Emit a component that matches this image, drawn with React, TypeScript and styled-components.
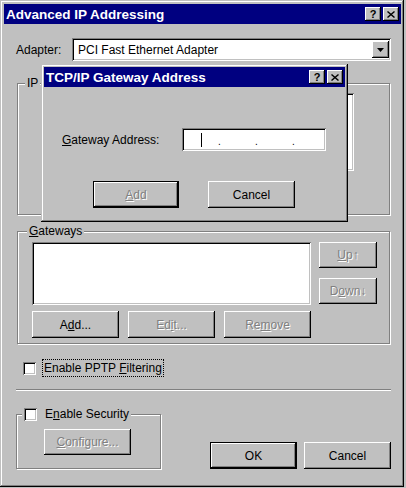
import React from "react";
import styled, { createGlobalStyle, css } from "styled-components";

const GlobalStyle = createGlobalStyle`
  html, body {
    margin: 0;
    padding: 0;
    background: #c0c0c0;
  }
  body {
    font-family: "Liberation Sans", Arial, sans-serif;
    font-size: 12px;
    color: #000;
  }
`;

const frame = css`
  box-shadow: inset -1px -1px #000, inset 1px 1px #c0c0c0, inset -2px -2px #808080, inset 2px 2px #fff;
`;

const raised = css`
  box-shadow: inset -1px -1px #000, inset 1px 1px #fff, inset -2px -2px #808080, inset 2px 2px #c0c0c0;
`;

const sunken = css`
  box-shadow: inset 1px 1px #808080, inset -1px -1px #fff, inset 2px 2px #000, inset -2px -2px #c0c0c0;
`;

const Window = styled.div`
  position: relative;
  width: 404px;
  height: 487px;
  box-sizing: border-box;
  padding: 4px 3px 3px 4px;
  background: #c0c0c0;
  display: flex;
  flex-direction: column;
  ${frame}
`;

const Dialog = styled.div`
  position: absolute;
  left: 41px;
  top: 64px;
  width: 307px;
  height: 158px;
  box-sizing: border-box;
  padding: 3px;
  background: #c0c0c0;
  display: flex;
  flex-direction: column;
  ${frame}
`;

const TitleBar = styled.div`
  height: 20px;
  flex: none;
  display: flex;
  align-items: center;
  justify-content: space-between;
  padding: 0 2px;
  background: #000080;
  color: #fff;
  font-weight: bold;
  font-size: 13.5px;
`;

const Caption = styled.div`
  display: flex;
  gap: 2px;
`;

const CaptionButton = styled.div`
  width: 16px;
  height: 14px;
  box-sizing: border-box;
  display: flex;
  align-items: center;
  justify-content: center;
  background: #c0c0c0;
  color: #000;
  font-size: 11px;
  font-weight: bold;
  ${raised}
`;

const Body = styled.div`
  display: flex;
  flex-direction: column;
  padding: 14px 10px 0 12px;
`;

const Row = styled.div`
  display: flex;
  align-items: center;
`;

const FieldLabel = styled.span<{ $w: number }>`
  width: ${(p) => p.$w}px;
  flex: none;
`;

const Combo = styled.div`
  flex: 1;
  height: 23px;
  box-sizing: border-box;
  padding: 2px 2px 2px 6px;
  display: flex;
  align-items: center;
  background: #fff;
  ${sunken}
`;

const ComboText = styled.span`
  flex: 1;
`;

const DropButton = styled.div`
  width: 17px;
  height: 17px;
  display: flex;
  align-items: center;
  justify-content: center;
  background: #c0c0c0;
  ${raised}
`;

const Group = styled.div<{ $h: number; $w?: number; $mt: number; $ml?: number }>`
  position: relative;
  box-sizing: border-box;
  height: ${(p) => p.$h}px;
  width: ${(p) => (p.$w ? `${p.$w}px` : "auto")};
  margin: ${(p) => p.$mt}px 1px 0 ${(p) => p.$ml ?? 1}px;
  border: 1px solid #808080;
  box-shadow: inset 1px 1px #fff, 1px 1px #fff;
`;

const Legend = styled.span<{ $left: number }>`
  position: absolute;
  top: -8px;
  left: ${(p) => p.$left}px;
  padding: 0 2px;
  line-height: 14px;
  background: #c0c0c0;
  display: flex;
  align-items: center;
  gap: 8px;
`;

const ListBox = styled.div<{ $w: number; $h: number }>`
  width: ${(p) => p.$w}px;
  height: ${(p) => p.$h}px;
  background: #fff;
  ${sunken}
`;

const IpInner = styled.div`
  display: flex;
  justify-content: flex-end;
  padding: 9px 35px 0 0;
`;

const GwGrid = styled.div`
  display: grid;
  grid-template-columns: 279px 58px;
  column-gap: 8px;
  row-gap: 6px;
  padding: 10px 0 0 14px;
`;

const Stack = styled.div`
  display: flex;
  flex-direction: column;
  gap: 10px;
`;

const ButtonRow = styled.div<{ $gap?: number }>`
  display: flex;
  justify-content: ${(p) => (p.$gap ? "flex-start" : "space-between")};
  gap: ${(p) => p.$gap ?? 0}px;
`;

const Btn = styled.button<{ $w: number; $h?: number; $def?: boolean }>`
  width: ${(p) => p.$w}px;
  height: ${(p) => p.$h ?? 26}px;
  box-sizing: border-box;
  margin: 0;
  padding: 0;
  border: ${(p) => (p.$def ? "1px solid #000" : "none")};
  background: #c0c0c0;
  font-family: "Liberation Sans", Arial, sans-serif;
  font-size: 12px;
  color: #000;
  ${raised}
  &:disabled {
    color: #808080;
    text-shadow: 1px 1px #fff;
  }
`;

const CheckRow = styled.div`
  display: flex;
  align-items: center;
  gap: 6px;
  height: 18px;
  margin-top: 15px;
  padding-left: 7px;
`;

const Check = styled.span`
  width: 13px;
  height: 13px;
  flex: none;
  background: #fff;
  ${sunken}
`;

const Focus = styled.span`
  padding: 1px 1px;
  border: 1px dotted #000;
`;

const Separator = styled.div`
  margin-top: 12px;
  height: 0;
  border-top: 1px solid #808080;
  border-bottom: 1px solid #fff;
`;

const Bottom = styled.div`
  display: flex;
  align-items: flex-end;
  margin-top: 23px;
`;

const Spacer = styled.div`
  flex: 1;
`;

const SecInner = styled.div`
  padding: 14px 0 0 27px;
`;

const DlgBody = styled.div`
  display: flex;
  flex-direction: column;
  padding-left: 18px;
`;

const IpField = styled.div`
  width: 144px;
  height: 23px;
  box-sizing: border-box;
  padding: 2px;
  display: flex;
  background: #fff;
  ${sunken}
`;

const Seg = styled.span<{ $w?: number }>`
  width: ${(p) => (p.$w ? `${p.$w}px` : "auto")};
  flex: ${(p) => (p.$w ? "none" : "1")};
  display: flex;
  align-items: center;
  justify-content: center;
`;

const Dot = styled.span`
  width: 3px;
  display: flex;
  align-items: flex-end;
  justify-content: center;
  padding-bottom: 3px;
  font-size: 10px;
  line-height: 8px;
`;

const Caret = styled.span`
  width: 1px;
  height: 14px;
  background: #000;
`;

const CloseIcon = () => (
  <svg width="8" height="7" viewBox="0 0 8 7">
    <path d="M0.5 0.5 L7.5 6.5 M7.5 0.5 L0.5 6.5" stroke="#000" strokeWidth="1.4" fill="none" />
  </svg>
);

const CaptionButtons = () => (
  <Caption>
    <CaptionButton>?</CaptionButton>
    <CaptionButton>
      <CloseIcon />
    </CaptionButton>
  </Caption>
);

export default function App() {
  return (
    <>
      <GlobalStyle />
      <Window>
        <TitleBar>
          <span>Advanced IP Addressing</span>
          <CaptionButtons />
        </TitleBar>
        <Body>
          <Row>
            <FieldLabel $w={56}>Adapter:</FieldLabel>
            <Combo>
              <ComboText>PCI Fast Ethernet Adapter</ComboText>
              <DropButton>
                <svg width="7" height="4" viewBox="0 0 7 4">
                  <path d="M0 0 H7 L3.5 4 Z" fill="#000" />
                </svg>
              </DropButton>
            </Combo>
          </Row>

          {/* the IP address group sits behind the gateway dialog */}
          <Group $h={132} $mt={22}>
            <Legend $left={7}>IP</Legend>
            <IpInner>
              <ListBox $w={260} $h={78} />
            </IpInner>
          </Group>

          <Group $h={113} $mt={16}>
            <Legend $left={9}>
              <span>
                <u>G</u>ateways
              </span>
            </Legend>
            <GwGrid>
              <ListBox $w={279} $h={63} />
              <Stack>
                <Btn $w={58} disabled>
                  <u>U</u>p↑
                </Btn>
                <Btn $w={58} disabled>
                  D<u>o</u>wn↓
                </Btn>
              </Stack>
              <ButtonRow>
                <Btn $w={87} $h={27}>
                  A<u>d</u>d...
                </Btn>
                <Btn $w={87} $h={27} disabled>
                  Ed<u>i</u>t...
                </Btn>
                <Btn $w={87} $h={27} disabled>
                  Re<u>m</u>ove
                </Btn>
              </ButtonRow>
            </GwGrid>
          </Group>

          <CheckRow>
            <Check />
            <Focus>
              Enable PPTP <u>F</u>iltering
            </Focus>
          </CheckRow>

          <Separator />

          <Bottom>
            <Group $h={55} $w={145} $mt={0} $ml={0}>
              <Legend $left={5}>
                <Check />
                <span>
                  E<u>n</u>able Security
                </span>
              </Legend>
              <SecInner>
                <Btn $w={87} disabled>
                  <u>C</u>onfigure...
                </Btn>
              </SecInner>
            </Group>
            <Spacer />
            <ButtonRow $gap={7}>
              <Btn $w={87} $h={27} $def>
                OK
              </Btn>
              <Btn $w={87} $h={27}>
                Cancel
              </Btn>
            </ButtonRow>
          </Bottom>
        </Body>

        <Dialog>
          <TitleBar>
            <span>TCP/IP Gateway Address</span>
            <CaptionButtons />
          </TitleBar>
          <DlgBody>
            <Row style={{ marginTop: 41 }}>
              <FieldLabel $w={120}>
                <u>G</u>ateway Address:
              </FieldLabel>
              <IpField>
                <Seg $w={34}>
                  <Caret />
                </Seg>
                <Dot>.</Dot>
                <Seg $w={34} />
                <Dot>.</Dot>
                <Seg $w={34} />
                <Dot>.</Dot>
                <Seg />
              </IpField>
            </Row>
            <ButtonRow $gap={29} style={{ marginTop: 30, paddingLeft: 31 }}>
              <Btn $w={86} $h={27} $def disabled>
                <u>A</u>dd
              </Btn>
              <Btn $w={87} $h={27}>
                Cancel
              </Btn>
            </ButtonRow>
          </DlgBody>
        </Dialog>
      </Window>
    </>
  );
}
